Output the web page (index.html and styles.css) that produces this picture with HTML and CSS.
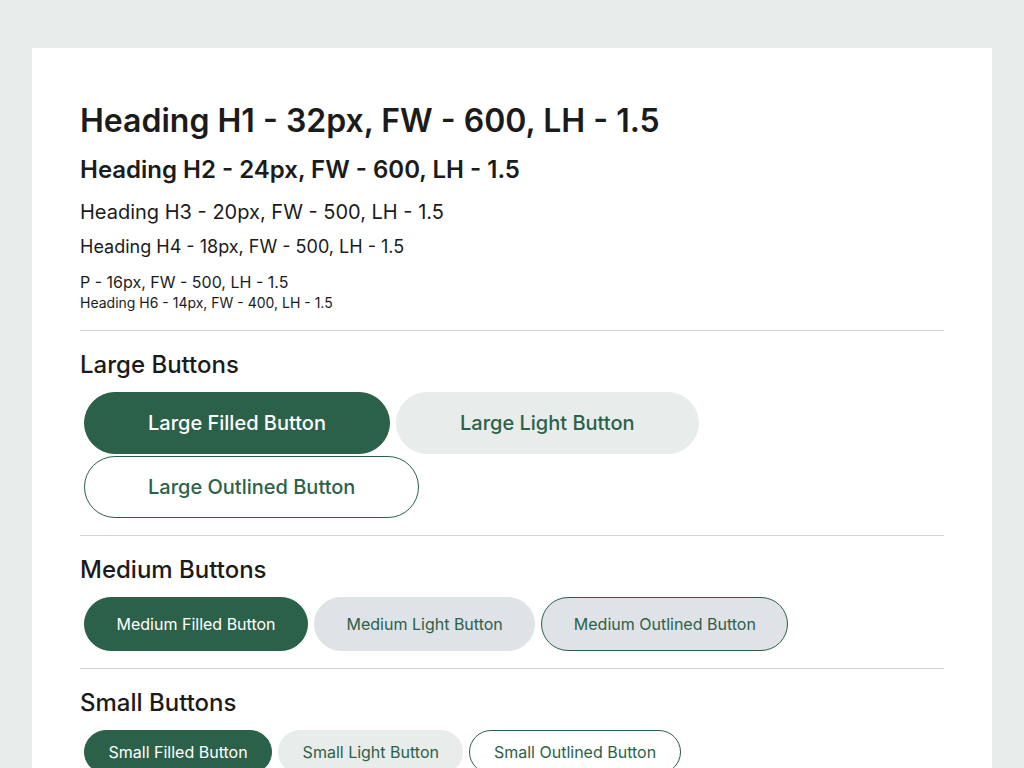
FILE: index.html
```html
<!DOCTYPE html>
<html lang="en">
<head>
<meta charset="utf-8">
<title>Typography &amp; Buttons</title>
<link rel="stylesheet" href="styles.css">
</head>
<body>
<main class="card">
  <section class="type">
    <h1 class="h1">Heading H1 - 32px, FW - 600, LH - 1.5</h1>
    <h2 class="h2">Heading H2 - 24px, FW - 600, LH - 1.5</h2>
    <h3 class="h3">Heading H3 - 20px, FW - 500, LH - 1.5</h3>
    <h4 class="h4">Heading H4 - 18px, FW - 500, LH - 1.5</h4>
    <p class="p">P - 16px, FW - 500, LH - 1.5</p>
    <h6 class="h6">Heading H6 - 14px, FW - 400, LH - 1.5</h6>
  </section>
  <hr class="sep">
  <section class="group">
    <h2 class="group-title">Large Buttons</h2>
    <div class="btns">
      <button class="btn lg filled">Large Filled Button</button>
      <button class="btn lg light">Large Light Button</button>
      <button class="btn lg outlined">Large Outlined Button</button>
    </div>
  </section>
  <hr class="sep">
  <section class="group">
    <h2 class="group-title">Medium Buttons</h2>
    <div class="btns">
      <button class="btn md filled">Medium Filled Button</button>
      <button class="btn md light md-light">Medium Light Button</button>
      <button class="btn md outlined md-outlined">Medium Outlined Button</button>
    </div>
  </section>
  <hr class="sep">
  <section class="group">
    <h2 class="group-title">Small Buttons</h2>
    <div class="btns">
      <button class="btn sm filled">Small Filled Button</button>
      <button class="btn sm light">Small Light Button</button>
      <button class="btn sm outlined">Small Outlined Button</button>
    </div>
  </section>
</main>
</body>
</html>
```

FILE: styles.css
```css
* { box-sizing: border-box; }
html, body { margin: 0; }
body {
  background: #e8ecea;
  padding: 48px 32px;
  font-family: Inter, "Noto Sans", sans-serif;
  color: #1b1b1b;
}
.card {
  background: #ffffff;
  padding: 49px 48px 48px 48px;
}
.type h1, .type h2, .type h3, .type h4, .type p, .type h6 { margin: 0; line-height: 1.5; }
.h1 { font-size: 32px; font-weight: 600; margin-bottom: 7px !important; }
.h2 { font-size: 24px; font-weight: 600; margin-bottom: 9px !important; }
.h3 { font-size: 20px; font-weight: 400; margin-bottom: 6px !important; }
.h4 { font-size: 18px; font-weight: 400; margin-bottom: 10px !important; }
.p { font-size: 16px; font-weight: 400; }
.h6 { font-size: 14px; font-weight: 400; margin-top: -2px !important; }
.sep {
  border: 0;
  border-top: 1px solid #d3d3d3;
  margin: 17px 0 16px;
}
.group-title {
  margin: 0 0 9px;
  font-size: 24px;
  font-weight: 500;
  line-height: 1.5;
}
.btns {
  display: flex;
  flex-wrap: wrap;
  column-gap: 6px;
  row-gap: 2px;
  padding-left: 4px;
}
.btn {
  font-family: Inter, "Noto Sans", sans-serif;
  border: 1px solid transparent;
  border-radius: 999px;
  cursor: pointer;
  line-height: 1.5;
  color: #2c6149;
}
.lg { font-size: 20px; font-weight: 500; padding: 15px 63px; }
.md { font-size: 16px; font-weight: 400; padding: 14px 31.5px; }
.sm { font-size: 16px; font-weight: 400; padding: 9px 23.5px; }
.filled { background: #2c6149; border-color: #2c6149; color: #ffffff; }
.light { background: #e8ecea; border-color: #e8ecea; }
.outlined { background: #ffffff; border-color: #2c6149; }
.md-light { background: #dfe2e6; border-color: #dfe2e6; }
.md-outlined { background: #dfe2e6; }
```
